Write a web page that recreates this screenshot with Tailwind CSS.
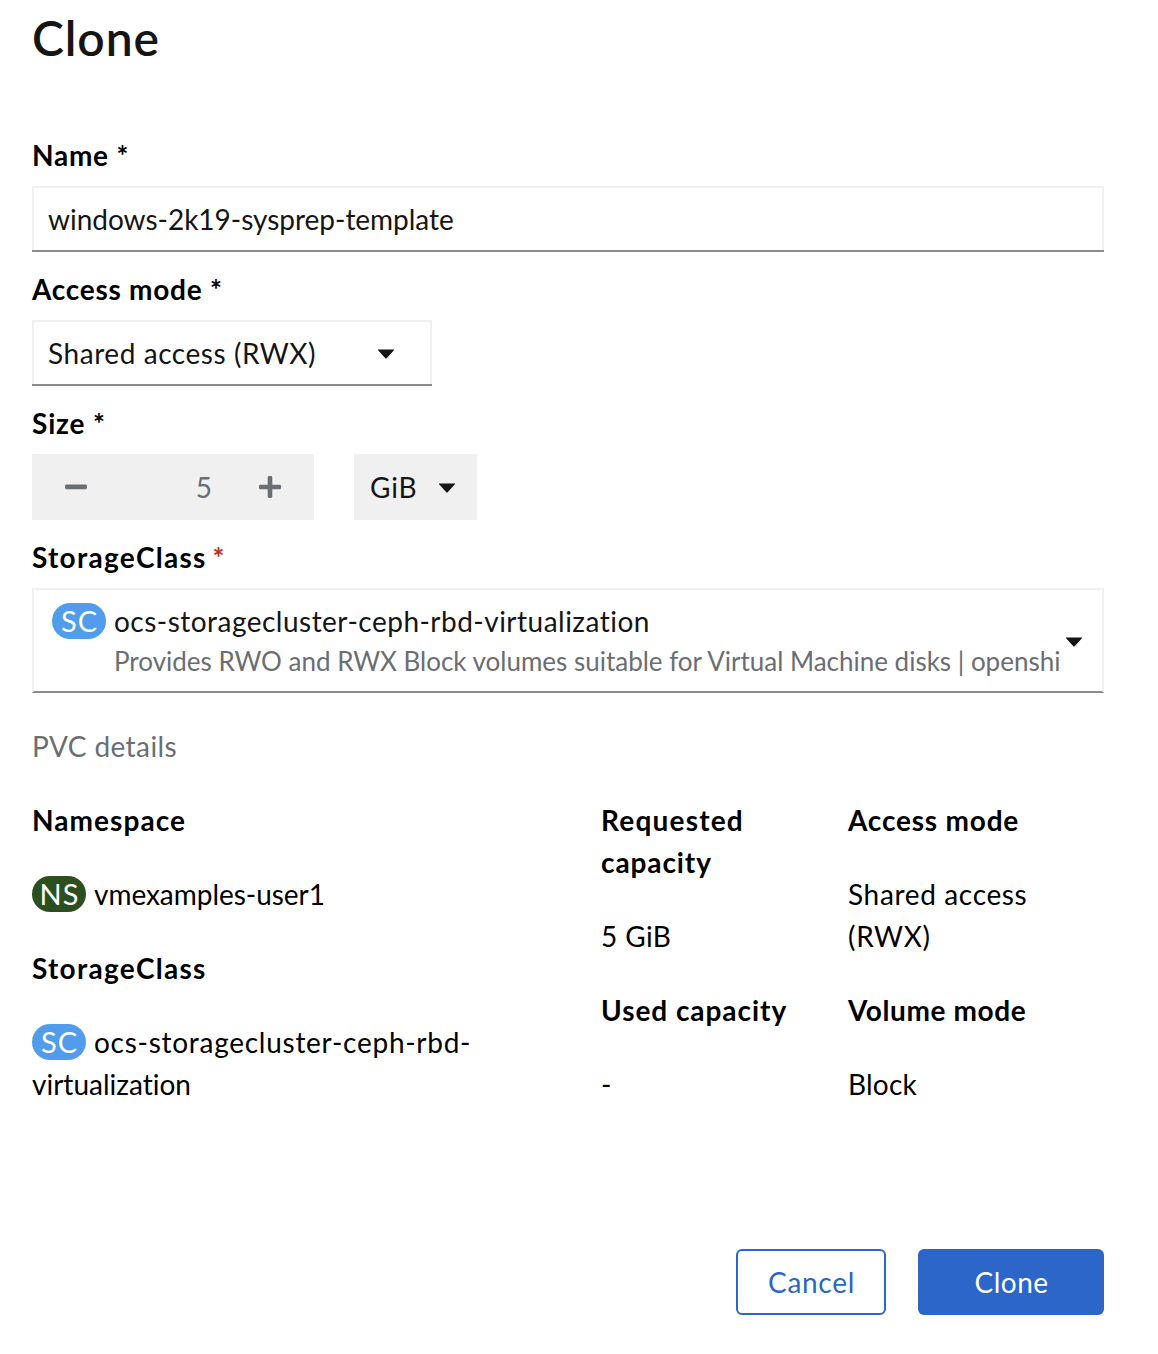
<!DOCTYPE html>
<html lang="en">
<head>
<meta charset="utf-8">
<title>Clone</title>
<script src="https://cdn.jsdelivr.net/npm/@tailwindcss/browser@4"></script>
</head>
<body class="bg-white">
<form class="flex h-[1354px] w-[1158px] flex-col overflow-hidden pl-8 pr-[54px] pt-[7px] font-['Lato',sans-serif] text-[28px] leading-[42px] text-black [font-variant-ligatures:none]">
  <h1 class="h-[62px] text-[48px] font-semibold leading-[62px] tracking-[0.9px] text-[#151515]">Clone</h1>

  <div class="mt-[65px] flex flex-col gap-4">
    <div>
      <label class="block font-bold tracking-[0.75px]">Name *</label>
      <div class="mt-2.5 h-[66px] border-b-2 border-[#8a8d90]">
        <div class="flex h-16 items-center border-x-2 border-t-2 border-[#f0f0f0] pl-3.5 tracking-[-0.02px] text-[#151515]">windows-2k19-sysprep-template</div>
      </div>
    </div>
    <div>
      <label class="block font-bold tracking-[0.74px]">Access mode *</label>
      <div class="mt-2.5 h-[66px] w-[400px] border-b-2 border-[#8a8d90]">
        <div class="flex h-16 items-center justify-between border-x-2 border-t-2 border-[#f0f0f0] pl-3.5 pr-[35px] text-[#151515]">
          <span class="tracking-[0.56px]">Shared access (RWX)</span>
          <svg class="mt-0.5 h-[10px] w-[18px]" viewBox="0 0 18 10"><path d="M1.400.400h15.200c.6 0 .7.500.3.900L9.700 9.200c-.4.400-1 .4-1.400 0L1.100 1.300c-.4-.4-.3-.9.3-.9z" fill="#151515"/></svg>
        </div>
      </div>
    </div>
    <div>
      <label class="block font-bold tracking-[0.84px]">Size *</label>
      <div class="mt-2.5 flex h-[66px] gap-10">
        <div class="flex w-[282px] items-center bg-[#f0f0f0] pl-[33px] pr-[33px] text-[#6a6e73]">
          <svg class="size-[22px]" viewBox="0 0 22 22"><rect y="8.600" width="22" height="4.600" rx="1.400" fill="#6a6e73"/></svg>
          <span class="ml-auto mr-[47px]">5</span>
          <svg class="size-[22px]" viewBox="0 0 22 22"><path d="M1.400 8.700h7.300V1.400Q8.700 0 10.100 0h1.800q1.400 0 1.400 1.400v7.300h7.300q1.400 0 1.400 1.400v1.800q0 1.400-1.400 1.400h-7.300v7.300q0 1.400-1.400 1.400h-1.800q-1.400 0-1.400-1.400v-7.300H1.400Q0 13.300 0 11.900v-1.800Q0 8.700 1.400 8.700z" fill="#6a6e73"/></svg>
        </div>
        <div class="flex w-[123px] items-center justify-between bg-[#f0f0f0] pl-4 pr-[21px] text-[#151515]">
          <span class="tracking-[0.8px]">GiB</span>
          <svg class="mt-0.5 h-[10px] w-[18px]" viewBox="0 0 18 10"><path d="M1.400.400h15.200c.6 0 .7.500.3.900L9.700 9.200c-.4.400-1 .4-1.400 0L1.100 1.300c-.4-.4-.3-.9.3-.9z" fill="#151515"/></svg>
        </div>
      </div>
    </div>
    <div>
      <label class="block font-bold tracking-[1.27px]">StorageClass<span class="pl-1.5 text-[#c02c1b]">*</span></label>
      <div class="mt-2.5 flex h-[105px] items-center border-2 border-[#f0f0f0] border-b-[#8a8d90] pl-[18px] pr-[19px] text-[#151515]">
        <span class="-mt-[39px] flex h-9 w-[54px] shrink-0 items-center justify-center rounded-full bg-[#519dec] pl-px text-[29px] tracking-[1px] text-[#fff]">SC</span>
        <div class="ml-2 w-[947px] overflow-hidden whitespace-nowrap">
          <div class="h-10 leading-10 tracking-[0.48px]">ocs-storagecluster-ceph-rbd-virtualization</div>
          <div class="h-[39px] text-[26px] leading-[40px] tracking-[-0.01px] text-[#6a6e73]">Provides RWO and RWX Block volumes suitable for Virtual Machine disks | openshi</div>
        </div>
        <svg class="ml-auto mt-0.5 h-[10px] w-[18px] shrink-0" viewBox="0 0 18 10"><path d="M1.400.400h15.200c.6 0 .7.500.3.900L9.700 9.200c-.4.400-1 .4-1.400 0L1.100 1.300c-.4-.4-.3-.9.3-.9z" fill="#151515"/></svg>
      </div>
    </div>
  </div>

  <div class="mt-8 tracking-[0.4px] text-[#6a6e73]">PVC details</div>

  <div class="mt-8 grid grid-cols-[569px_247px_256px]">
    <dl class="flex flex-col gap-8">
      <dt class="font-bold tracking-[1.06px]">Namespace</dt>
      <dd class="flex items-center gap-2"><span class="flex h-9 w-[54px] items-center justify-center rounded-full bg-[#2d4f20] pl-px text-[29px] tracking-[1px] text-[#fff]">NS</span><span class="tracking-[-0.04px]">vmexamples-user1</span></dd>
      <dt class="font-bold tracking-[1.27px]">StorageClass</dt>
      <dd>
        <div class="flex items-center gap-2"><span class="flex h-9 w-[54px] items-center justify-center rounded-full bg-[#519dec] pl-px text-[29px] tracking-[1px] text-[#fff]">SC</span><span class="tracking-[0.73px]">ocs-storagecluster-ceph-rbd-</span></div>
        <div>virtualization</div>
      </dd>
    </dl>
    <dl class="flex flex-col gap-8">
      <dt class="font-bold tracking-[1.2px]">Requested<br><span class="tracking-[0.9px]">capacity</span></dt>
      <dd class="tracking-[0.4px]">5 GiB</dd>
      <dt class="font-bold tracking-[0.95px]">Used capacity</dt>
      <dd>-</dd>
    </dl>
    <dl class="flex flex-col gap-8">
      <dt class="font-bold tracking-[0.8px]">Access mode</dt>
      <dd class="tracking-[0.65px]">Shared access<br>(RWX)</dd>
      <dt class="font-bold tracking-[0.6px]">Volume mode</dt>
      <dd class="tracking-[0.2px]">Block</dd>
    </dl>
  </div>

  <div class="mt-[144px] flex justify-end gap-8">
    <button type="button" class="h-[66px] w-[150px] rounded-md border-2 border-[#2b66c8] pl-px tracking-[0.7px] text-[#2b66c8]">Cancel</button>
    <button type="button" class="h-[66px] w-[186px] rounded-md bg-[#2b66c8] pl-px tracking-[0.5px] text-white">Clone</button>
  </div>
</form>
</body>
</html>
